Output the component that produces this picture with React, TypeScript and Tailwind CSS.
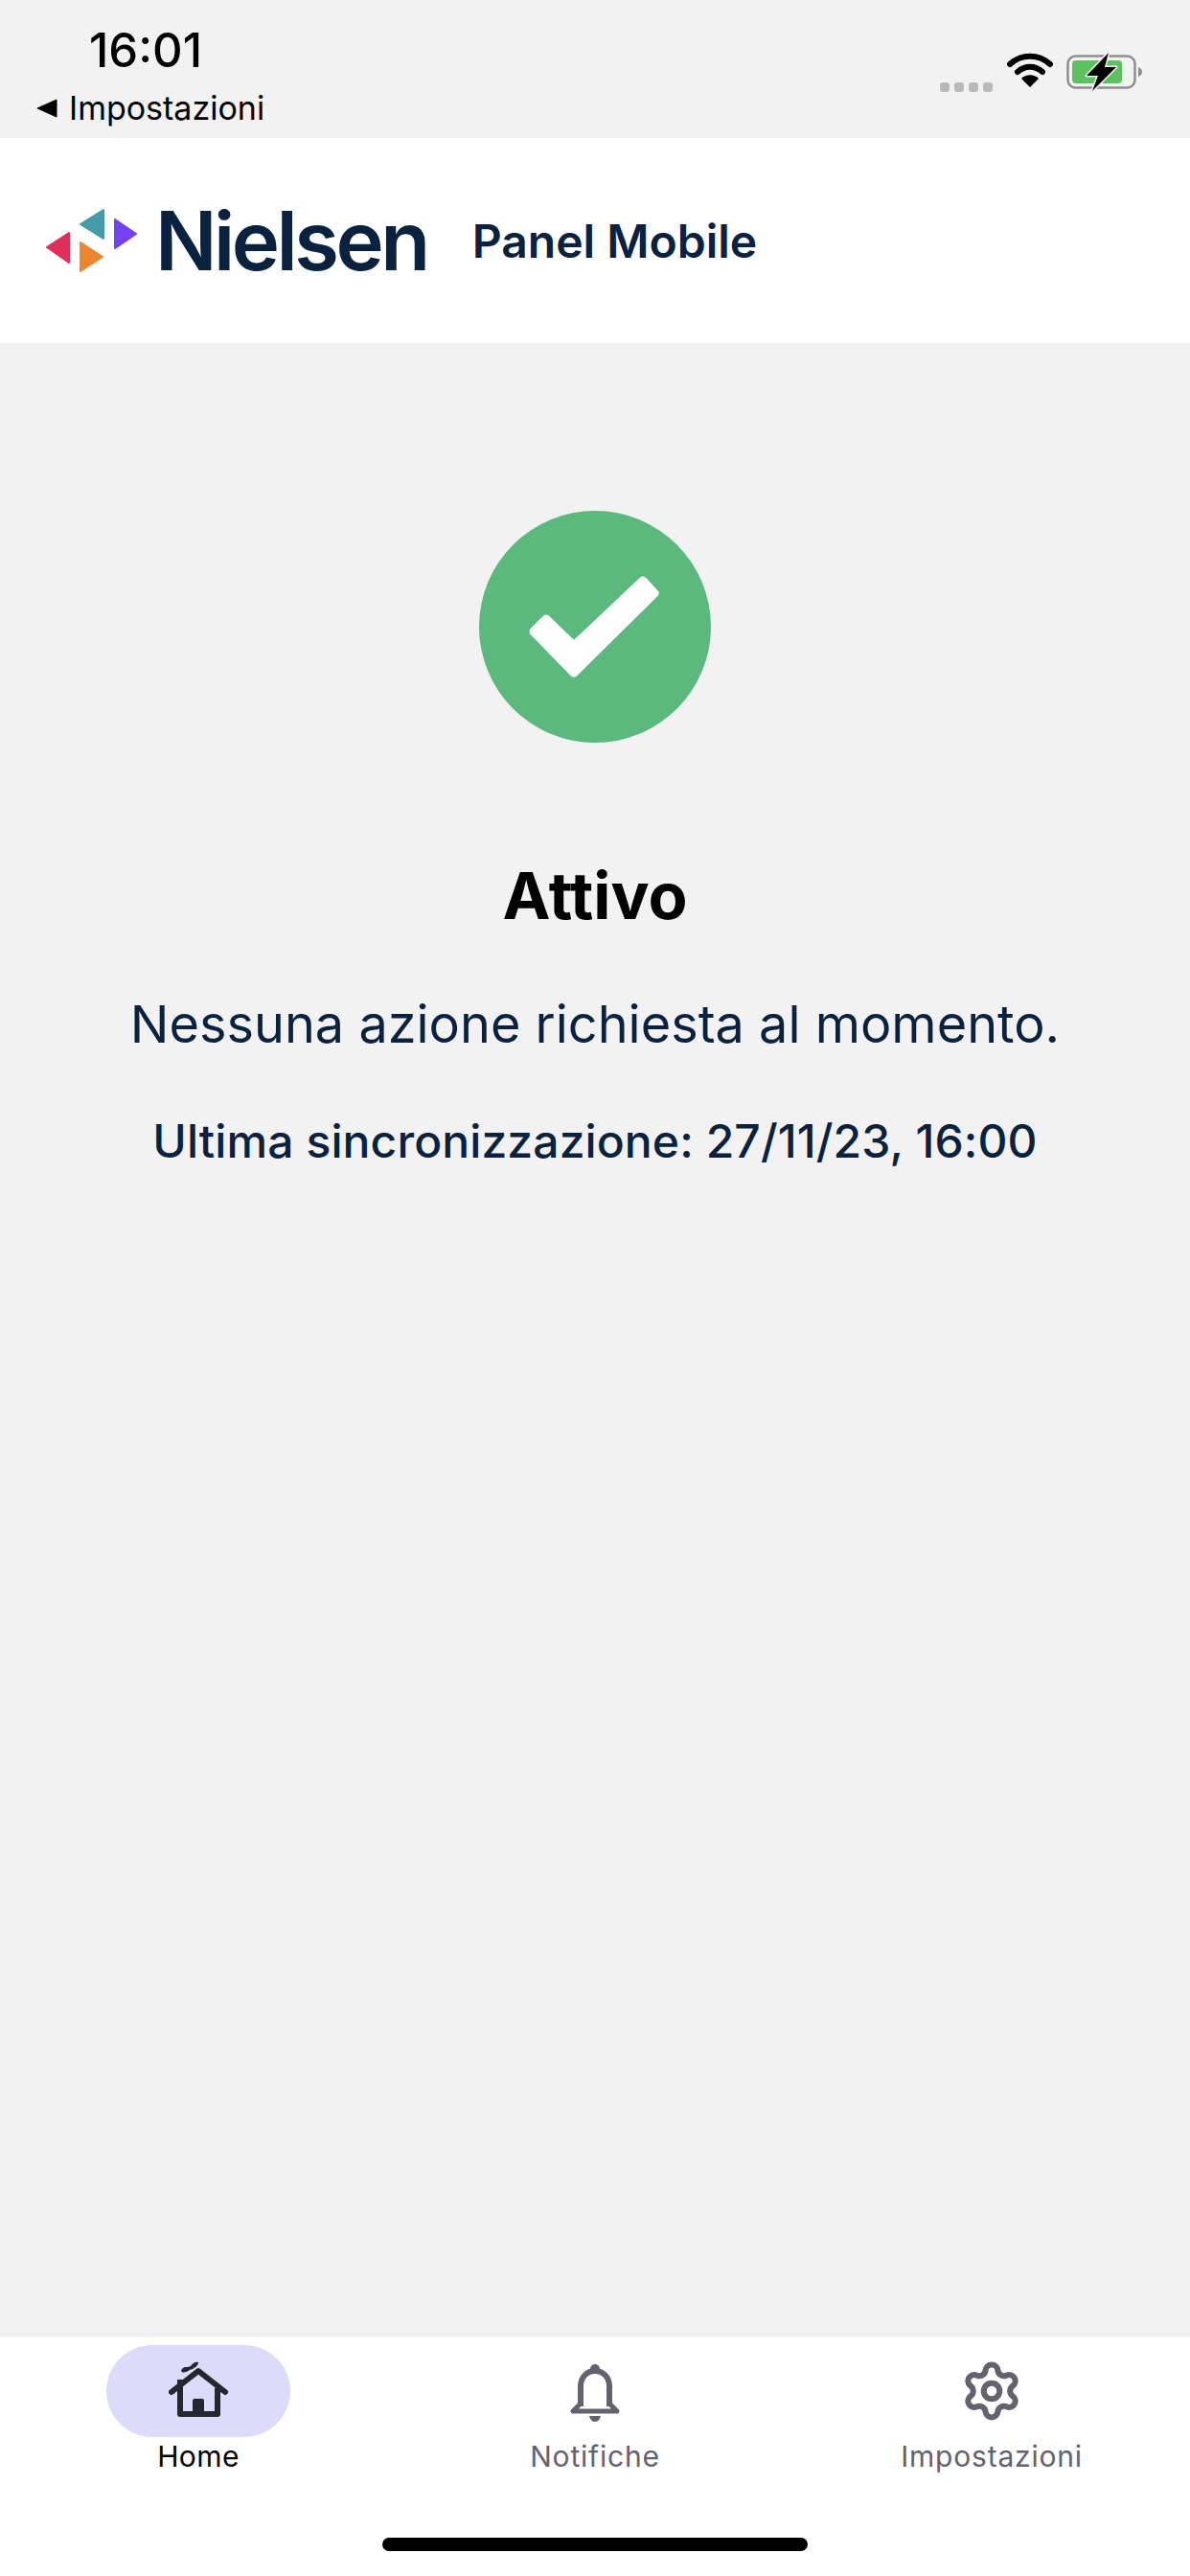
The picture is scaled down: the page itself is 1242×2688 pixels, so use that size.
import React from "react";
import { Settings } from "lucide-react";

const font = { fontFamily: "Inter, 'Liberation Sans', sans-serif" };

function NielsenMark() {
  return (
    <svg width="98" height="68" viewBox="46 216 98 68" className="shrink-0">
      <path d="M108 218 L108 248 L84 233 Z" fill="#459ca8" stroke="#459ca8" strokeWidth="2" strokeLinejoin="round" />
      <path d="M120 228 L142 243 L120 258 Z" fill="#7340f0" stroke="#7340f0" strokeWidth="2" strokeLinejoin="round" />
      <path d="M72 242 L72 273 L49 257 Z" fill="#dd2f58" stroke="#dd2f58" strokeWidth="2" strokeLinejoin="round" />
      <path d="M84 252 L107 267 L84 282 Z" fill="#ec8530" stroke="#ec8530" strokeWidth="2" strokeLinejoin="round" />
    </svg>
  );
}

function StatusIcons() {
  return (
    <div className="flex items-start">
      <div className="flex gap-[5px] mt-[31px] mr-[15px]">
        <div className="w-[10px] h-[10px] rounded-[3px] bg-[#b9b9b9]" />
        <div className="w-[10px] h-[10px] rounded-[3px] bg-[#b9b9b9]" />
        <div className="w-[10px] h-[10px] rounded-[3px] bg-[#b9b9b9]" />
        <div className="w-[10px] h-[10px] rounded-[3px] bg-[#b9b9b9]" />
      </div>
      <svg width="48" height="36" viewBox="0 0 48 36" className="mr-[14px]">
        <path d="M3 12 C15 1 33 1 45 12" fill="none" stroke="#000" strokeWidth="6" strokeLinecap="round" />
        <path d="M11 20 C19 13 29 13 37 20" fill="none" stroke="#000" strokeWidth="6" strokeLinecap="round" />
        <path d="M15 27 C20 22 28 22 33 27 L24 36 Z" fill="#000" />
      </svg>
      <svg width="80" height="40" viewBox="0 0 80 40">
        <rect x="1.5" y="3.5" width="70" height="33" rx="8" fill="none" stroke="#8e8e8e" strokeWidth="2.5" />
        <rect x="6" y="8" width="52" height="24" rx="4" fill="#5cc15f" />
        <path d="M75 15 C78 16 79 18 79 20 C79 22 78 24 75 25 Z" fill="#8e8e8e" />
        <path d="M44 0 L21 24 L33 24 L27 40 L52 15 L40 15 Z" fill="#000" stroke="#f2f2f2" strokeWidth="3" strokeLinejoin="round" paintOrder="stroke" />
      </svg>
    </div>
  );
}

function HomeIcon() {
  return (
    <svg width="64" height="64" viewBox="0 0 64 64" fill="none">
      <path d="M4 33 L32 11 L60 33" stroke="#26262e" strokeWidth="6" strokeLinecap="round" strokeLinejoin="round" />
      <path d="M13 20 V56 H52 V29" stroke="#26262e" strokeWidth="6" strokeLinejoin="round" />
      <rect x="26" y="40" width="12" height="15" rx="2" fill="#26262e" />
      <path d="M14 11 C16 5 21 8 24 6 C26 3 29 1 32 2 C32 6 27 9 23 10 C20 12 16 14 14 11 Z" fill="#26262e" />
    </svg>
  );
}

function BellIcon() {
  return (
    <svg width="56" height="64" viewBox="0 0 56 64" fill="none" className="mt-[3px]">
      <circle cx="28" cy="7" r="5" fill="#62636f" />
      <path d="M13 46 V25 C13 15 20 9 28 9 C36 9 43 15 43 25 V46" stroke="#62636f" strokeWidth="6" />
      <path d="M12 44 L5 51 H51 L44 44" stroke="#62636f" strokeWidth="5" strokeLinejoin="round" />
      <path d="M3 49 H53 V53 H3 Z" fill="#62636f" />
      <path d="M22 56 H34 C33 60 31 62 28 62 C25 62 23 60 22 56 Z" fill="#62636f" />
    </svg>
  );
}

export default function App() {
  return (
    <div style={font} className="w-[1242px] h-[2688px] flex flex-col bg-[#f2f2f2] overflow-hidden">
      <div className="h-[144px] shrink-0 flex justify-between bg-[#f2f2f2] pl-[38px] pr-[49px]">
        <div className="flex flex-col">
          <div className="pl-[55px] pt-[28px] text-[49px] leading-[50px] font-medium text-black">16:01</div>
          <div className="flex items-center mt-[16px] gap-[12px]">
            <svg width="22" height="22" viewBox="0 0 22 22"><path d="M1 11 L21 2 V20 Z" fill="#000" stroke="#000" strokeWidth="1" strokeLinejoin="round" /></svg>
            <span className="text-[34px] leading-[38px] text-black">Impostazioni</span>
          </div>
        </div>
        <div className="pt-[55px]"><StatusIcons /></div>
      </div>

      <header className="h-[214px] shrink-0 bg-white flex items-center pl-[46px]">
        <NielsenMark />
        <span className="ml-[18px] mt-[2px] text-[85px] leading-[88px] font-semibold tracking-[-3.5px] text-[#0a2240]">Nielsen</span>
        <span className="ml-[47px] mt-[2px] text-[48px] leading-[60px] font-semibold text-[#0a2240]">Panel Mobile</span>
      </header>

      <main className="flex-1 flex flex-col items-center pt-[175px]">
        <div className="w-[242px] h-[242px] rounded-full bg-[#5cb97d] flex items-center justify-center">
          <svg width="242" height="242" viewBox="0 0 242 242">
            <path d="M70 113 L57 126 L99 169 L183 86 L171 73 L99 141 Z" fill="#fff" stroke="#fff" strokeWidth="9" strokeLinejoin="round" />
          </svg>
        </div>
        <h1 className="mt-[120px] text-[67px] leading-[80px] font-bold text-black">Attivo</h1>
        <p className="mt-[54px] text-[54px] leading-[80px] text-[#0a2240]">Nessuna azione richiesta al momento.</p>
        <p className="mt-[52px] text-[48px] leading-[60px] font-[450] tracking-[0.1px] text-[#0a2240]">Ultima sincronizzazione: 27/11/23, 16:00</p>
      </main>

      <nav className="h-[249px] shrink-0 bg-white flex flex-col">
        <div className="grid grid-cols-3 pt-[8px]">
          <div className="flex flex-col items-center">
            <div className="w-[192px] h-[96px] rounded-full bg-[#dddbfa] flex items-center justify-center"><HomeIcon /></div>
            <span className="text-[30px] leading-[40px] tracking-[0.4px] text-black">Home</span>
          </div>
          <div className="flex flex-col items-center">
            <div className="h-[96px] flex items-center justify-center"><BellIcon /></div>
            <span className="text-[30px] leading-[40px] tracking-[0.8px] text-[#62636f]">Notifiche</span>
          </div>
          <div className="flex flex-col items-center">
            <div className="h-[96px] flex items-center justify-center"><Settings size={66} color="#62636f" strokeWidth={2.2} /></div>
            <span className="text-[30px] leading-[40px] tracking-[0.8px] text-[#62636f]">Impostazioni</span>
          </div>
        </div>
        <div className="mt-auto mb-[26px] mx-auto w-[444px] h-[14px] rounded-full bg-black" />
      </nav>
    </div>
  );
}
